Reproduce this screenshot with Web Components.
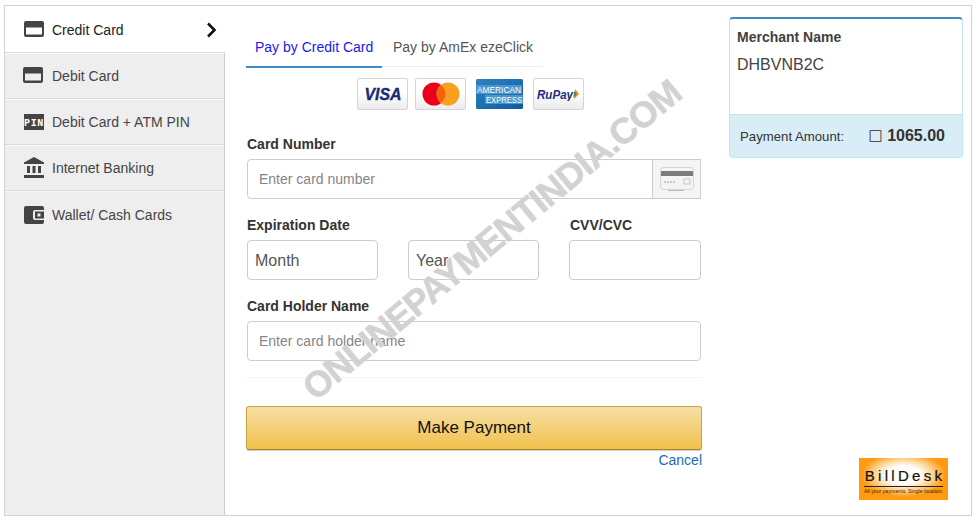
<!DOCTYPE html>
<html lang="en">
<head>
<meta charset="utf-8">
<title>Payment</title>
<style>
  html, body { margin: 0; background: #fff; }
  body { padding: 5px 0 0 4px; font-family: "Liberation Sans", Arial, sans-serif; color: #333; font-size: 14px; }
</style>
</head>
<body>
<pay-page>
  <side-nav slot="nav">
    <nav-item icon="card" active>Credit Card</nav-item>
    <nav-item icon="card" nudge>Debit Card</nav-item>
    <nav-item icon="pin">Debit Card + ATM PIN</nav-item>
    <nav-item icon="bank">Internet Banking</nav-item>
    <nav-item icon="wallet" last>Wallet/ Cash Cards</nav-item>
  </side-nav>
  <card-form slot="form"></card-form>
  <order-panel slot="side" merchant="DHBVNB2C" amount="1065.00"></order-panel>
</pay-page>

<script>
// Marco general: menu, formulario, resumen y marca de agua encima
class PayPage extends HTMLElement {
  connectedCallback() {
    const shadow = this.attachShadow({ mode: 'open' });
    shadow.innerHTML = `
      <style>
        :host { display: block; }
        .frame {
          position: relative; overflow: hidden; display: flex; box-sizing: border-box;
          width: 968px; height: 511px; border: 1px solid #d2d2d2; background: #fff;
        }
        .form { display: block; width: 456px; margin-left: 21px; }
        .side { display: block; width: 234px; margin-left: 27px; }
        .mark {
          position: absolute; left: 487px; top: 234px; transform: translate(-50%, -50%) rotate(-39.6deg);
          white-space: nowrap; font: bold 36px "Liberation Sans", Arial, sans-serif; letter-spacing: -.9px; color: #d2d2d2;
          -webkit-text-stroke: .5px #d2d2d2; pointer-events: none;
        }
      </style>
      <div class="frame">
        <slot name="nav"></slot>
        <div class="form"><slot name="form"></slot></div>
        <div class="side"><slot name="side"></slot></div>
        <div class="mark">ONLINEPAYMENTINDIA.COM</div>
      </div>`;
  }
}

class SideNav extends HTMLElement {
  connectedCallback() {
    const shadow = this.attachShadow({ mode: 'open' });
    shadow.innerHTML = `
      <style>
        :host {
          display: block; box-sizing: border-box; width: 220px; flex: none;
          background: #eee; border-right: 1px solid #ccc;
        }
      </style>
      <slot></slot>`;
  }
}

// Iconos del menu
const ICONOS_MENU = {
  card: `<svg width="20" height="16" viewBox="0 0 20 16"><path fill="#444" fill-rule="evenodd" d="M2 0h16a2 2 0 0 1 2 2v12a2 2 0 0 1-2 2H2a2 2 0 0 1-2-2V2a2 2 0 0 1 2-2zM2 6.500v7h16v-7z"/></svg>`,
  pin: `<svg width="20" height="16" viewBox="0 0 20 16"><rect width="20" height="16" fill="#444"/><text x="10" y="12" text-anchor="middle" font-family="Liberation Mono, monospace" font-weight="bold" font-size="10" letter-spacing=".7" fill="#fff">PIN</text></svg>`,
  bank: `<svg width="20" height="21" viewBox="0 0 20 21"><path fill="#444" d="M10 0 20 5.500v1.500H0V5.500zM3 9h3v7H3zM8.500 9h3v7h-3zM14 9h3v7h-3zM0 18h20v3H0z"/></svg>`,
  wallet: `<svg width="20" height="18" viewBox="0 0 20 18"><path fill="#444" fill-rule="evenodd" d="M2 0h16a2 2 0 0 1 2 2v2h-9a2 2 0 0 0-2 2v6a2 2 0 0 0 2 2h9v2a2 2 0 0 1-2 2H2a2 2 0 0 1-2-2V2a2 2 0 0 1 2-2zM11 5.500h9v7h-9zM13.500 7.500v3h3v-3z"/></svg>`
};

class NavItem extends HTMLElement {
  connectedCallback() {
    const shadow = this.attachShadow({ mode: 'open' });
    const activo = this.hasAttribute('active');
    const flecha = activo
      ? `<svg class="chev" width="11" height="16" viewBox="0 0 11 16"><path d="M2 1.500 8.500 8 2 14.500" fill="none" stroke="#111" stroke-width="2.600"/></svg>`
      : '';
    shadow.innerHTML = `
      <style>
        :host {
          display: flex; align-items: center; box-sizing: border-box; height: 46px;
          padding: 0 7px 0 19px; border-bottom: 1px solid #dcdcdc; border-top: 1px solid #f8f8f8;
          font-size: 14px; color: #444;
        }
        :host([active]) { background: #fff; color: #222; margin-right: -1px; border-top: 0; height: 47px; padding: 1px 8px 0 19px; }
        :host([nudge]) { padding-left: 18px; }
        :host([nudge]) .icono { width: 29px; }
        :host([last]) { border-bottom: 0; }
        :host([icon="card"]) .icono, :host([icon="bank"]) .icono { margin-top: -2px; }
        .icono { width: 28px; display: flex; align-items: center; flex: none; }
        .chev { margin-left: auto; }
      </style>
      <span class="icono">${ICONOS_MENU[this.getAttribute('icon')]}</span>
      <slot></slot>${flecha}`;
  }
}

// Pestañas de arriba
class PayTabs extends HTMLElement {
  connectedCallback() {
    const shadow = this.attachShadow({ mode: 'open' });
    shadow.innerHTML = `
      <style>
        :host { display: flex; width: 297px; height: 61px; box-sizing: border-box; border-bottom: 1px solid #eee; font-size: 14px; }
        .tab { height: 61px; box-sizing: border-box; padding: 33px 9px 0; white-space: nowrap; color: #555; }
        .on { width: 136px; height: 62px; color: #1a1aee; border-bottom: 2px solid #428bca; }
      </style>
      <div class="tab on">Pay by Credit Card</div>
      <div class="tab" style="padding-left:11px">Pay by AmEx ezeClick</div>`;
  }
}

// Logos de tarjetas
class CardLogos extends HTMLElement {
  connectedCallback() {
    const shadow = this.attachShadow({ mode: 'open' });
    shadow.innerHTML = `
      <style>
        :host { display: flex; align-items: center; height: 32px; margin-top: 11px; padding-left: 111px; }
        .chip {
          box-sizing: border-box; width: 51px; height: 32px; border: 1px solid #d5d5d5; border-radius: 2px;
          background: linear-gradient(#fff 40%, #ececec); display: flex; align-items: center; justify-content: center;
        }
        .m1 { margin-left: 7px; }
        .amex { margin-left: 10px; margin-right: 10px; flex: none; }
        text { font-family: "Liberation Sans", Arial, sans-serif; }
      </style>
      <div class="chip">
        <svg width="40" height="16" viewBox="0 0 40 16"><text x="20" y="14" text-anchor="middle" font-size="16" font-weight="bold" font-style="italic" fill="#1a2a72" stroke="#1a2a72" stroke-width=".35" textLength="37" lengthAdjust="spacingAndGlyphs">VISA</text></svg>
      </div>
      <div class="chip m1">
        <svg width="38" height="24" viewBox="0 0 38 24"><circle cx="12" cy="12" r="11.500" fill="#eb001b"/><circle cx="26" cy="12" r="11.500" fill="#f9a01f"/><path d="M19 3a11.500 11.500 0 0 1 0 18 11.500 11.500 0 0 1 0-18z" fill="#f5620c"/></svg>
      </div>
      <svg class="amex" width="47" height="30" viewBox="0 0 47 30">
        <defs><linearGradient id="azul" x1="0" y1="0" x2="1" y2="1"><stop offset="0" stop-color="#2a83c4"/><stop offset="1" stop-color="#0f5c9f"/></linearGradient></defs>
        <rect width="47" height="30" rx="1.500" fill="url(#azul)"/>
        <rect x="0" y="6" width="46" height="9" fill="#4a97cf"/><rect x="9" y="16" width="38" height="9" fill="#4a97cf"/>
        <text x="23" y="14" text-anchor="middle" font-size="9.500" fill="#fff" textLength="44" lengthAdjust="spacingAndGlyphs">AMERICAN</text>
        <text x="28" y="24" text-anchor="middle" font-size="9.500" fill="#fff" textLength="36" lengthAdjust="spacingAndGlyphs">EXPRESS</text>
      </svg>
      <div class="chip">
        <svg width="44" height="14" viewBox="0 0 44 14"><text x="0" y="11.500" font-size="12" font-weight="bold" font-style="italic" fill="#1f2f7c" textLength="36" lengthAdjust="spacingAndGlyphs">RuPay</text><path d="M38 2l4 5-5 5z" fill="#e98a27"/><path d="M37 4l2.500 3-3 4z" fill="#3b8e3f"/></svg>
      </div>`;
  }
}

class FieldLabel extends HTMLElement {
  connectedCallback() {
    const shadow = this.attachShadow({ mode: 'open' });
    shadow.innerHTML = `
      <style>
        :host { display: block; font-size: 14px; font-weight: bold; line-height: 16px; color: #333; margin-bottom: 7px; margin-left: 1px; white-space: nowrap; }
      </style>
      <slot></slot>`;
  }
}

// Campo de texto o select sin flecha
class TextBox extends HTMLElement {
  connectedCallback() {
    const shadow = this.attachShadow({ mode: 'open' });
    const texto = this.getAttribute('placeholder') || '';
    const opcion = this.getAttribute('option');
    const campo = opcion
      ? `<select class="campo sel"><option>${opcion}</option></select>`
      : `<input class="campo" type="text" placeholder="${texto}">`;
    const tarjeta = this.hasAttribute('addon') ? `
      <span class="addon">
        <svg width="34" height="25" viewBox="0 0 34 25">
          <rect x=".500" y=".500" width="33" height="22" rx="2.500" fill="#f4f4f4" stroke="#d8d8d8"/>
          <rect x="1" y="4" width="32" height="5" fill="#7c7c7c"/>
          <rect x="24" y="12" width="6" height="5" fill="none" stroke="#c8c8c8"/>
          <path d="M4 15h12" stroke="#c9c9c9" stroke-width="2" stroke-dasharray="2 1"/>
          <path d="M8 23.500h16" stroke="#bbb"/>
        </svg>
      </span>` : '';
    shadow.innerHTML = `
      <style>
        :host {
          display: flex; box-sizing: border-box; height: 40px; margin-left: 1px; overflow: hidden;
          border: 1px solid #ccc; border-radius: 4px; background: #fff;
        }
        :host([addon]) { border-radius: 4px 0 0 4px; }
        .campo {
          flex: 1; min-width: 0; border: 0; outline: 0; background: none; padding: 0 11px; margin: 0;
          font: 14px "Liberation Sans", Arial, sans-serif; color: #555;
        }
        .campo::placeholder { color: #858585; opacity: 1; }
        .sel { appearance: none; -webkit-appearance: none; padding: 0 7px; font-size: 16px; }
        .addon {
          flex: none; box-sizing: border-box; width: 48px; background: #f5f5f5; border-left: 1px solid #ccc;
          display: flex; align-items: center; justify-content: center;
        }
      </style>
      ${campo}${tarjeta}`;
  }
}

class PayButton extends HTMLElement {
  connectedCallback() {
    const shadow = this.attachShadow({ mode: 'open' });
    shadow.innerHTML = `
      <style>
        :host {
          display: flex; align-items: center; justify-content: center; box-sizing: border-box; height: 44px;
          border: 1px solid #c9a24a; border-bottom-color: #a98432; border-radius: 3px;
          background: linear-gradient(#f7dfa5, #f0c14b); box-shadow: 0 1px 1px rgba(0,0,0,.2);
          font-size: 17px; color: #111; cursor: pointer;
        }
      </style>
      <slot></slot>`;
  }
}

// Formulario completo
class CardForm extends HTMLElement {
  connectedCallback() {
    const shadow = this.attachShadow({ mode: 'open' });
    shadow.innerHTML = `
      <style>
        :host { display: block; }
        .cuerpo { margin-top: 26px; padding-right: 1px; }
        .fila { display: grid; grid-template-columns: 132px 131px 132px; column-gap: 30px; margin-top: 18px; }
        .fila > div { min-width: 0; }
        .fila > div + div text-box { margin-left: 0; }
        .bloque { margin-top: 18px; padding-right: 1px; }
        .linea { height: 1px; margin-top: 16px; background: #f4f4f4; }
        pay-button { margin-top: 28px; }
        .cancel { text-align: right; margin-top: 2px; font-size: 14px; line-height: 16px; color: #1b6bb3; text-decoration: none; display: block; }
      </style>
      <pay-tabs></pay-tabs>
      <card-logos></card-logos>
      <div class="cuerpo">
        <field-label>Card Number</field-label>
        <text-box addon placeholder="Enter card number"></text-box>
      </div>
      <div class="fila">
        <div><field-label>Expiration Date</field-label><text-box option="Month"></text-box></div>
        <div><field-label>&nbsp;</field-label><text-box option="Year"></text-box></div>
        <div><field-label>CVV/CVC</field-label><text-box></text-box></div>
      </div>
      <div class="bloque">
        <field-label>Card Holder Name</field-label>
        <text-box placeholder="Enter card holder name"></text-box>
      </div>
      <div class="linea"></div>
      <pay-button>Make Payment</pay-button>
      <a class="cancel" href="#">Cancel</a>`;
  }
}

// Logo BillDesk
class BillDeskLogo extends HTMLElement {
  connectedCallback() {
    const shadow = this.attachShadow({ mode: 'open' });
    shadow.innerHTML = `
      <style>
        :host {
          display: block; box-sizing: border-box; width: 89px; height: 42px; padding-top: 10px;
          background: radial-gradient(ellipse 42px 22px at 50% 40%, #fff 40%, #ffd08a 72%, #ff9a12 100%), #ff9a12;
          color: #111; text-align: center;
        }
        .nombre { font: 15px/16px "Liberation Sans", Arial, sans-serif; letter-spacing: 3.300px; padding-left: 3px; -webkit-text-stroke: .2px #111; }
        .lema { border-top: 1px solid #222; margin: 2px 5px 0; font: 5.200px/9px "Liberation Sans", Arial, sans-serif; white-space: nowrap; color: #3a2500; }
      </style>
      <div class="nombre">BillDesk</div>
      <div class="lema">All your payments. Single location.</div>`;
  }
}

// Panel de comercio e importe
class OrderPanel extends HTMLElement {
  connectedCallback() {
    const shadow = this.attachShadow({ mode: 'open' });
    shadow.innerHTML = `
      <style>
        :host { display: flex; flex-direction: column; height: 100%; box-sizing: border-box; padding: 11px 0 15px; }
        .caja {
          box-sizing: border-box; height: 141px; border: 1px solid #bce8f1; border-top: 2px solid #3c8dbc; border-radius: 4px;
          display: flex; flex-direction: column; overflow: hidden;
        }
        .datos { flex: 1; padding: 10px 7px 0; }
        .titulo { font-size: 14px; font-weight: bold; line-height: 16px; color: #3f3f3f; }
        .nombre { font-size: 16px; line-height: 18px; margin-top: 11px; color: #444; }
        .pie {
          height: 43px; box-sizing: border-box; display: flex; align-items: center; padding: 0 17px 0 10px;
          background: #d9edf7; border-top: 1px solid #d0e0e6; font-size: 13.200px; color: #333;
        }
        .total { margin-left: auto; font-size: 16px; font-weight: bold; color: #333; white-space: nowrap; }
        .rupia { font: 15px "DejaVu Sans", sans-serif; position: relative; top: -1px; }
        bill-desk-logo { margin: auto 0 0 130px; }
      </style>
      <div class="caja">
        <div class="datos">
          <div class="titulo">Merchant Name</div>
          <div class="nombre">${this.getAttribute('merchant')}</div>
        </div>
        <div class="pie">
          <span>Payment Amount:</span>
          <span class="total"><span class="rupia">□</span> ${this.getAttribute('amount')}</span>
        </div>
      </div>
      <bill-desk-logo></bill-desk-logo>`;
  }
}

customElements.define('pay-page', PayPage);
customElements.define('side-nav', SideNav);
customElements.define('nav-item', NavItem);
customElements.define('pay-tabs', PayTabs);
customElements.define('card-logos', CardLogos);
customElements.define('field-label', FieldLabel);
customElements.define('text-box', TextBox);
customElements.define('pay-button', PayButton);
customElements.define('card-form', CardForm);
customElements.define('bill-desk-logo', BillDeskLogo);
customElements.define('order-panel', OrderPanel);
</script>
</body>
</html>
